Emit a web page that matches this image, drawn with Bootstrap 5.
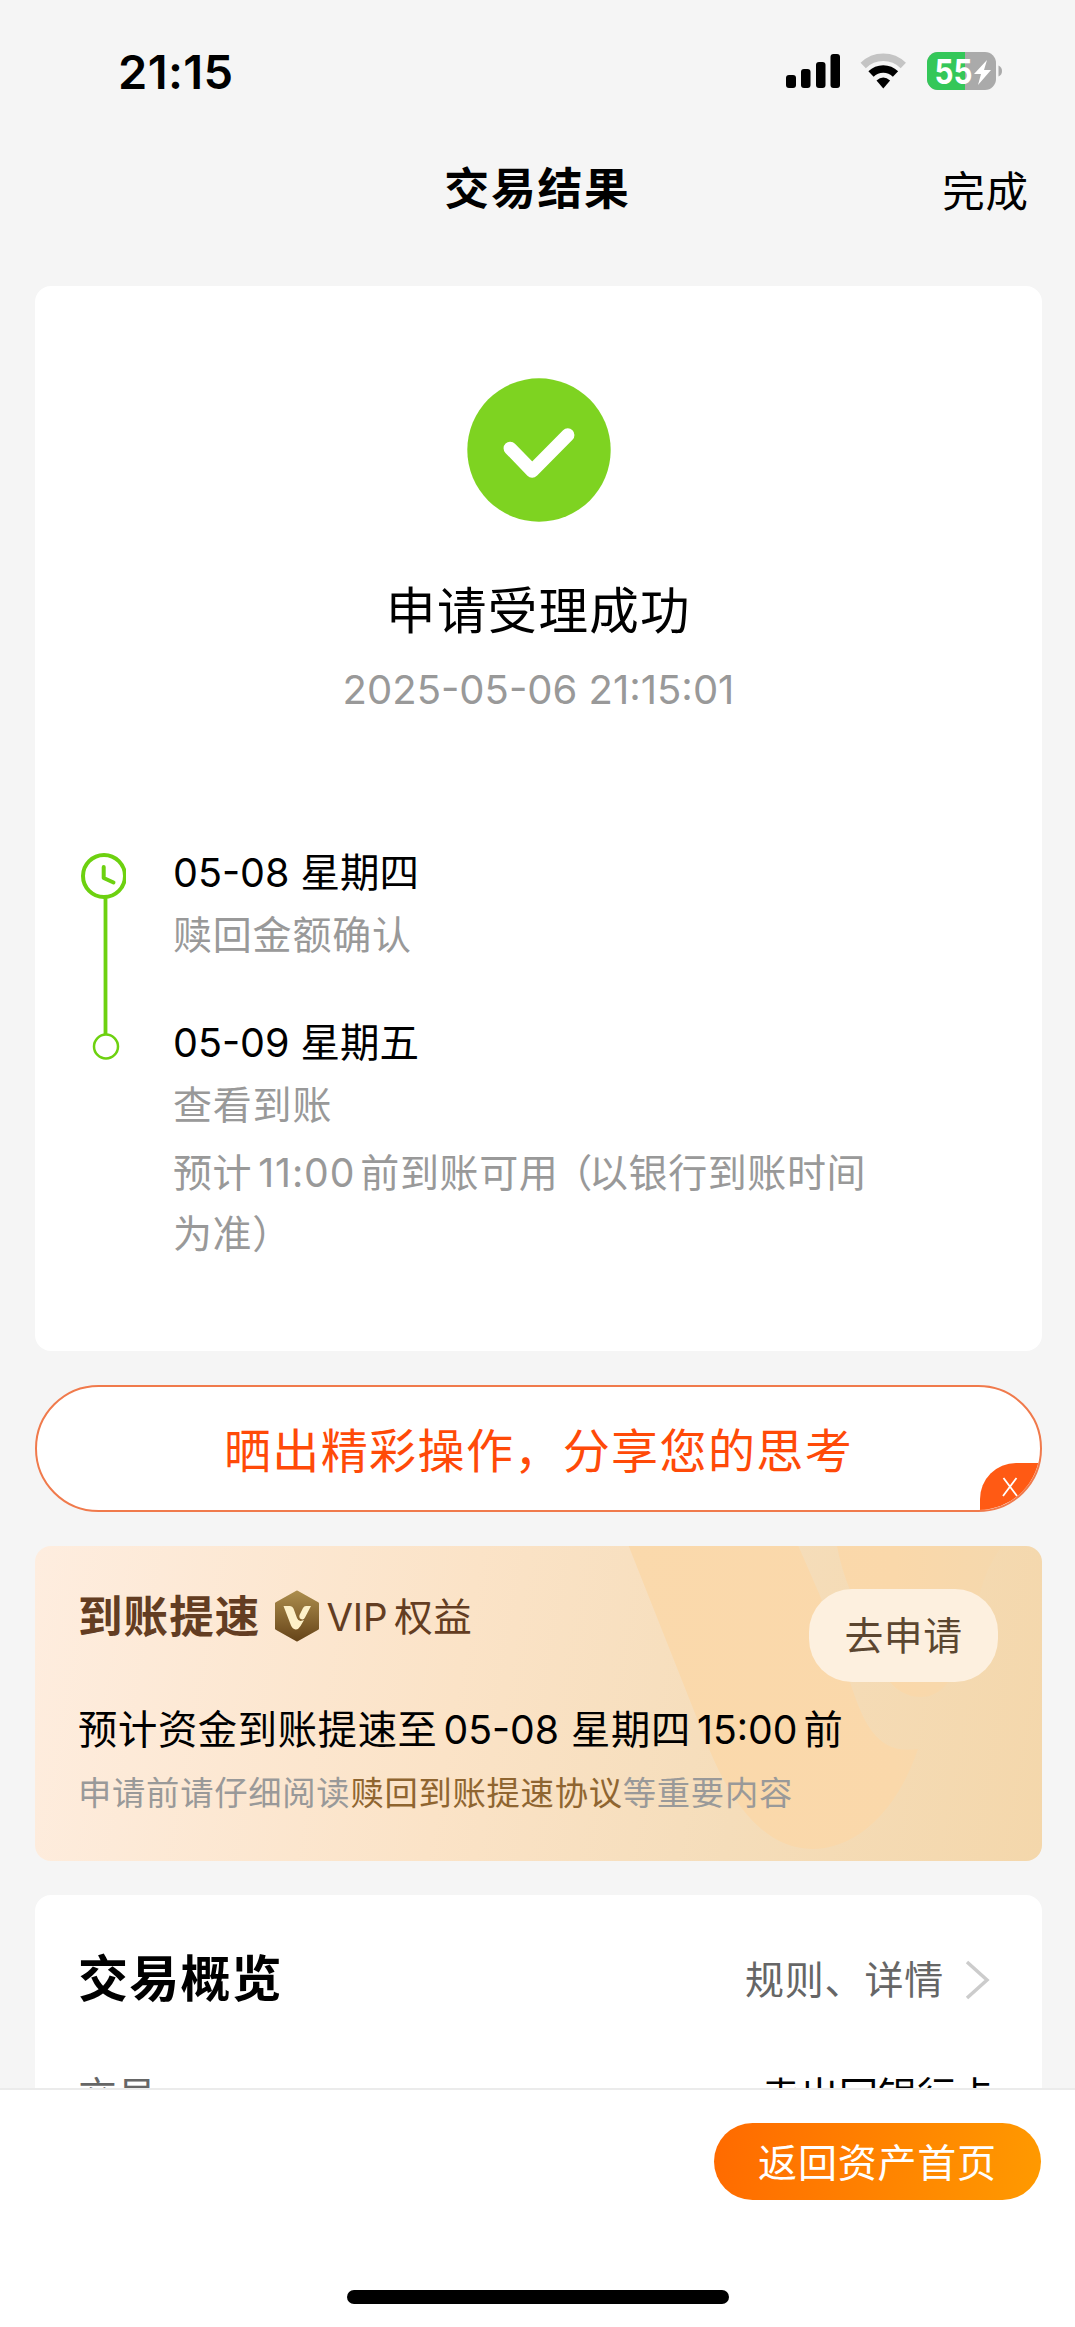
<!DOCTYPE html>
<html lang="zh-CN">
<head>
<meta charset="utf-8">
<meta name="viewport" content="width=device-width, initial-scale=1">
<title>交易结果</title>
<link href="https://cdn.jsdelivr.net/npm/bootstrap@5.3.0/dist/css/bootstrap.min.css" rel="stylesheet">
<style>
  body { background:#f5f5f5; color:#000; font-family:Inter,"Noto Sans CJK SC",sans-serif; height:2327px; overflow:hidden; }
  svg { display:block; flex:none; }
  .status-bar { height:142px; padding:2px 72px 0 118px; }
  .clock-text { font-size:47px; font-weight:600; line-height:60px; letter-spacing:.4px; }
  .title-bar { height:94px; padding:0 46px; }
  .title-side { width:120px; font-size:42.5px; letter-spacing:.9px; padding-top:5px; white-space:nowrap; }
  .title-main { font-size:44.8px; font-weight:700; letter-spacing:1.8px; padding-top:2px; }
  .page-main { padding:50px 33px 0 35px; }
  .panel { background:#fff; border-radius:16px; border:0; }
  .result-panel { height:1065px; padding:92px 45px 0; }
  .result-title { font-size:49.5px; line-height:70px; margin-top:54px; letter-spacing:1.3px; }
  .result-time { font-size:40px; line-height:60px; margin-top:14px; color:#999; letter-spacing:0; }
  .steps { margin-top:123px; }
  .steps svg { margin-top:10px; }
  .step-list { margin-left:47px; font-size:39px; width:720px; }
  .step-date { line-height:60px; font-size:39.5px; white-space:pre; }
  .step-note { line-height:62px; color:#999; letter-spacing:.8px; margin-top:1px; }
  .step-next { margin-top:47px; }
  .step-tip { line-height:61px; color:#999; letter-spacing:.6px; margin-top:6px; }
  .step-tip .num { letter-spacing:.9px; margin:0 5px 0 6px; }
  .paren-open { margin:0 -4px 0 -5px; }
  .num { margin:0 6px; letter-spacing:0; font-size:39.2px; }
  .num-date { margin-right:1px; }
  .share-pill { height:127px; margin-top:34px; padding-top:5px; border:2px solid #f07a4c; border-radius:64px; background:#fff; color:#ff4a08; font-size:47px; letter-spacing:1.4px; }
  .pill-close { right:-1px; bottom:-1px; width:61px; height:48px; background:#ff5a14; border-radius:36px 0 0 0; }
  .vip-panel { height:315px; margin-top:34px; border-radius:16px; background:linear-gradient(100deg,#feeddf 0%,#fbe3c7 42%,#f5ddba 70%,#f4d7ab 100%); }
  .vip-art { left:0; top:0; }
  .vip-body { padding:43px 44px 0 43px; }
  .vip-name { font-size:44.5px; font-weight:700; color:#633d22; letter-spacing:1.1px; line-height:57px; }
  .vip-mark { margin:1px 6px 0 14px; }
  .vip-tag { font-size:38.5px; color:#633d22; line-height:56px; letter-spacing:-.2px; }
  .vip-right { margin-left:7px; letter-spacing:.5px; }
  .vip-apply { width:189px; height:93px; border-radius:43px; background:#fdf0df; color:#5b4630; font-size:38.8px; letter-spacing:.6px; padding-top:2px; }
  .vip-line { font-size:39.3px; line-height:56px; letter-spacing:.65px; white-space:pre; margin-top:20px; }
  .vip-terms { font-size:33.3px; line-height:50px; letter-spacing:.75px; color:#999; margin-top:10px; }
  .vip-link { color:#8f6530; }
  .overview { height:400px; margin-top:34px; padding:0 47px 0 43px; }
  .ov-title { font-size:50px; font-weight:700; letter-spacing:1.2px; }
  .ov-head { padding-top:55px; height:114px; }
  .ov-link { font-size:39px; color:#666; letter-spacing:.8px; padding-top:1px; }
  .ov-arrow { margin:0 5px 0 20px; }
  .ov-row { font-size:39px; line-height:60px; margin-top:57px; }
  .ov-label { color:#666; }
  .bottom-bar { height:239px; background:#fff; border-top:2px solid #ebebeb; padding:33px 34px 0; }
  .home-btn { width:327px; height:77px; border-radius:39px; border:0; background:linear-gradient(100deg,#ff6a00,#ff9a00); color:#fff; font-size:39px; letter-spacing:.8px; }
  .home-indicator { width:382px; height:14px; border-radius:7px; background:#000; margin-top:90px; }
</style>
</head>
<body class="d-flex flex-column">
<header class="flex-shrink-0">
  <div class="status-bar d-flex align-items-center justify-content-between">
    <span class="clock-text">21:15</span>
    <svg width="217" height="40" viewBox="0 0 217 40">
      <g><rect x="0" y="23" width="10" height="13" rx="3"/><rect x="15" y="17" width="9.5" height="19" rx="3"/><rect x="30" y="10" width="9.5" height="26" rx="3"/><rect x="44.5" y="2" width="9.5" height="34" rx="3"/></g>
      <path d="M77.200 13.500A28.500 28.500 0 0 1 117.300 13.500" fill="none" stroke="#c4c4c4" stroke-width="7.500"/>
      <path d="M85 22A17.500 17.500 0 0 1 109.500 22" fill="none" stroke="#000" stroke-width="7.500"/>
      <path d="M90.500 28.500Q97.300 22.500 104.100 28.500L97.300 36.500Z"/>
      <clipPath id="bat"><rect x="141" y="0" width="69" height="38" rx="11"/></clipPath>
      <g clip-path="url(#bat)"><rect x="141" width="69" height="38" fill="#aaa"/><rect x="141" width="38" height="38" fill="#34c759"/></g>
      <path d="M212.500 13.500Q216 15 216 19Q216 23 212.500 24.500Z" fill="#aaa"/>
      <text x="148.500" y="31.500" font-size="34" font-weight="700" fill="#fff" textLength="38" lengthAdjust="spacingAndGlyphs">55</text>
      <path d="M201 8L188 22H195L192 33L205 18H198Z" fill="#fff"/>
    </svg>
  </div>
  <div class="title-bar d-flex align-items-center justify-content-between">
    <span class="title-side"></span>
    <span class="title-main">交易结果</span>
    <span class="title-side text-end">完成</span>
  </div>
</header>

<main class="page-main flex-grow-1 overflow-hidden">
  <section class="panel result-panel">
    <div class="d-flex flex-column align-items-center">
      <svg width="144" height="144" viewBox="0 0 144 144"><circle cx="72" cy="72" r="71.700" fill="#7ed321"/><path d="M43.200 70.300L65.200 93L100.800 57" fill="none" stroke="#fff" stroke-width="13.300" stroke-linecap="round" stroke-linejoin="round"/></svg>
      <div class="result-title">申请受理成功</div>
      <div class="result-time">2025-05-06 21:15:01</div>
    </div>
    <div class="steps d-flex">
      <svg width="46" height="210" viewBox="0 0 46 210" fill="none" stroke="#6dd110">
        <path d="M25.500 45V181" stroke-width="3.800"/>
        <circle cx="24" cy="23" r="21" stroke-width="4"/>
        <path d="M23.700 14V25L33.500 29.500" stroke-width="4" stroke-linecap="round" stroke-linejoin="round"/>
        <circle cx="26" cy="193.500" r="12" stroke-width="2.500"/>
      </svg>
      <div class="step-list">
        <div class="step-date">05-08 星期四</div>
        <div class="step-note">赎回金额确认</div>
        <div class="step-date step-next">05-09 星期五</div>
        <div class="step-note">查看到账</div>
        <div class="step-tip">预计<span class="num">11:00</span>前到账可用<span class="paren-open">（</span>以银行到账时间<br>为准）</div>
      </div>
    </div>
  </section>

  <section class="share-pill position-relative overflow-hidden d-flex align-items-center justify-content-center">
    晒出精彩操作，分享您的思考
    <span class="pill-close position-absolute">
      <svg width="60" height="48" viewBox="0 0 60 48"><path d="M23.500 15L37 33M36.500 15L23 33" stroke="#fff" stroke-width="1.800"/></svg>
    </span>
  </section>

  <section class="vip-panel position-relative overflow-hidden">
    <svg class="vip-art position-absolute" width="1007" height="315" viewBox="0 0 1007 315">
      <defs><linearGradient id="art" x1="590" y1="0" x2="975" y2="0" gradientUnits="userSpaceOnUse"><stop offset="0" stop-color="#fad9ac"/><stop offset=".7" stop-color="#fad8aa"/><stop offset="1" stop-color="#f5d8ad"/></linearGradient></defs>
      <g fill="url(#art)"><path d="M593.700 0L669 190C693 254 728 303 777 303C825 303 864 260 883 203C850 208 833 190 818 145L786 52L763.400 0Z"/>
      <path d="M802 0Q806 22 815 44C831 98 848 151 886 151C921 151 932 98 945 47Q951 22 967 0Z"/></g>
    </svg>
    <div class="vip-body position-relative">
      <div class="d-flex justify-content-between">
        <div class="d-flex">
          <span class="vip-name">到账提速</span>
          <svg class="vip-mark" width="46" height="52" viewBox="0 0 46 52">
            <defs><linearGradient id="hex" x1="0" y1="0" x2="0" y2="1"><stop offset="0" stop-color="#ab8c4c"/><stop offset="1" stop-color="#68461a"/></linearGradient></defs>
            <path d="M23 2L43.500 13.500V38.500L23 50L2.500 38.500V13.500Z" fill="url(#hex)" stroke="url(#hex)" stroke-width="3" stroke-linejoin="round"/>
            <path d="M9.500 16H16Q18.500 16 19.500 18.500L23 28Q24.500 32 28.500 30.500L30 30L26.500 36Q24 40 21.500 39.500Q18.500 39 17 35.500Z" fill="#fdf0c8"/>
            <path d="M37 16H32Q30 16 29 18L25.500 25Q24.500 29 28.500 29.500Q30 29.500 31 27.500Z" fill="#fdf0c8"/>
          </svg>
          <span class="vip-tag">VIP<span class="vip-right">权益</span></span>
        </div>
        <button class="btn vip-apply px-0 pb-0">去申请</button>
      </div>
      <div class="vip-line">预计资金到账提速至<span class="num num-date">05-08 </span>星期四<span class="num">15:00</span>前</div>
      <div class="vip-terms">申请前请仔细阅读<span class="vip-link">赎回到账提速协议</span>等重要内容</div>
    </div>
  </section>

  <section class="panel overview">
    <div class="ov-head d-flex justify-content-between align-items-center">
      <span class="ov-title">交易概览</span>
      <span class="ov-link d-flex align-items-center">规则、详情
        <svg class="ov-arrow" width="26" height="40" viewBox="0 0 26 40"><path d="M3 2L23 20L3 38" fill="none" stroke="#ccc" stroke-width="3.500"/></svg>
      </span>
    </div>
    <div class="ov-row d-flex justify-content-between"><span class="ov-label">交易</span><span>卖出回银行卡</span></div>
  </section>
</main>

<footer class="bottom-bar flex-shrink-0 d-flex flex-column">
  <button class="btn home-btn p-0 pt-1 align-self-end">返回资产首页</button>
  <div class="home-indicator align-self-center"></div>
</footer>
<script src="https://cdn.jsdelivr.net/npm/bootstrap@5.3.0/dist/js/bootstrap.bundle.min.js"></script>
</body>
</html>
